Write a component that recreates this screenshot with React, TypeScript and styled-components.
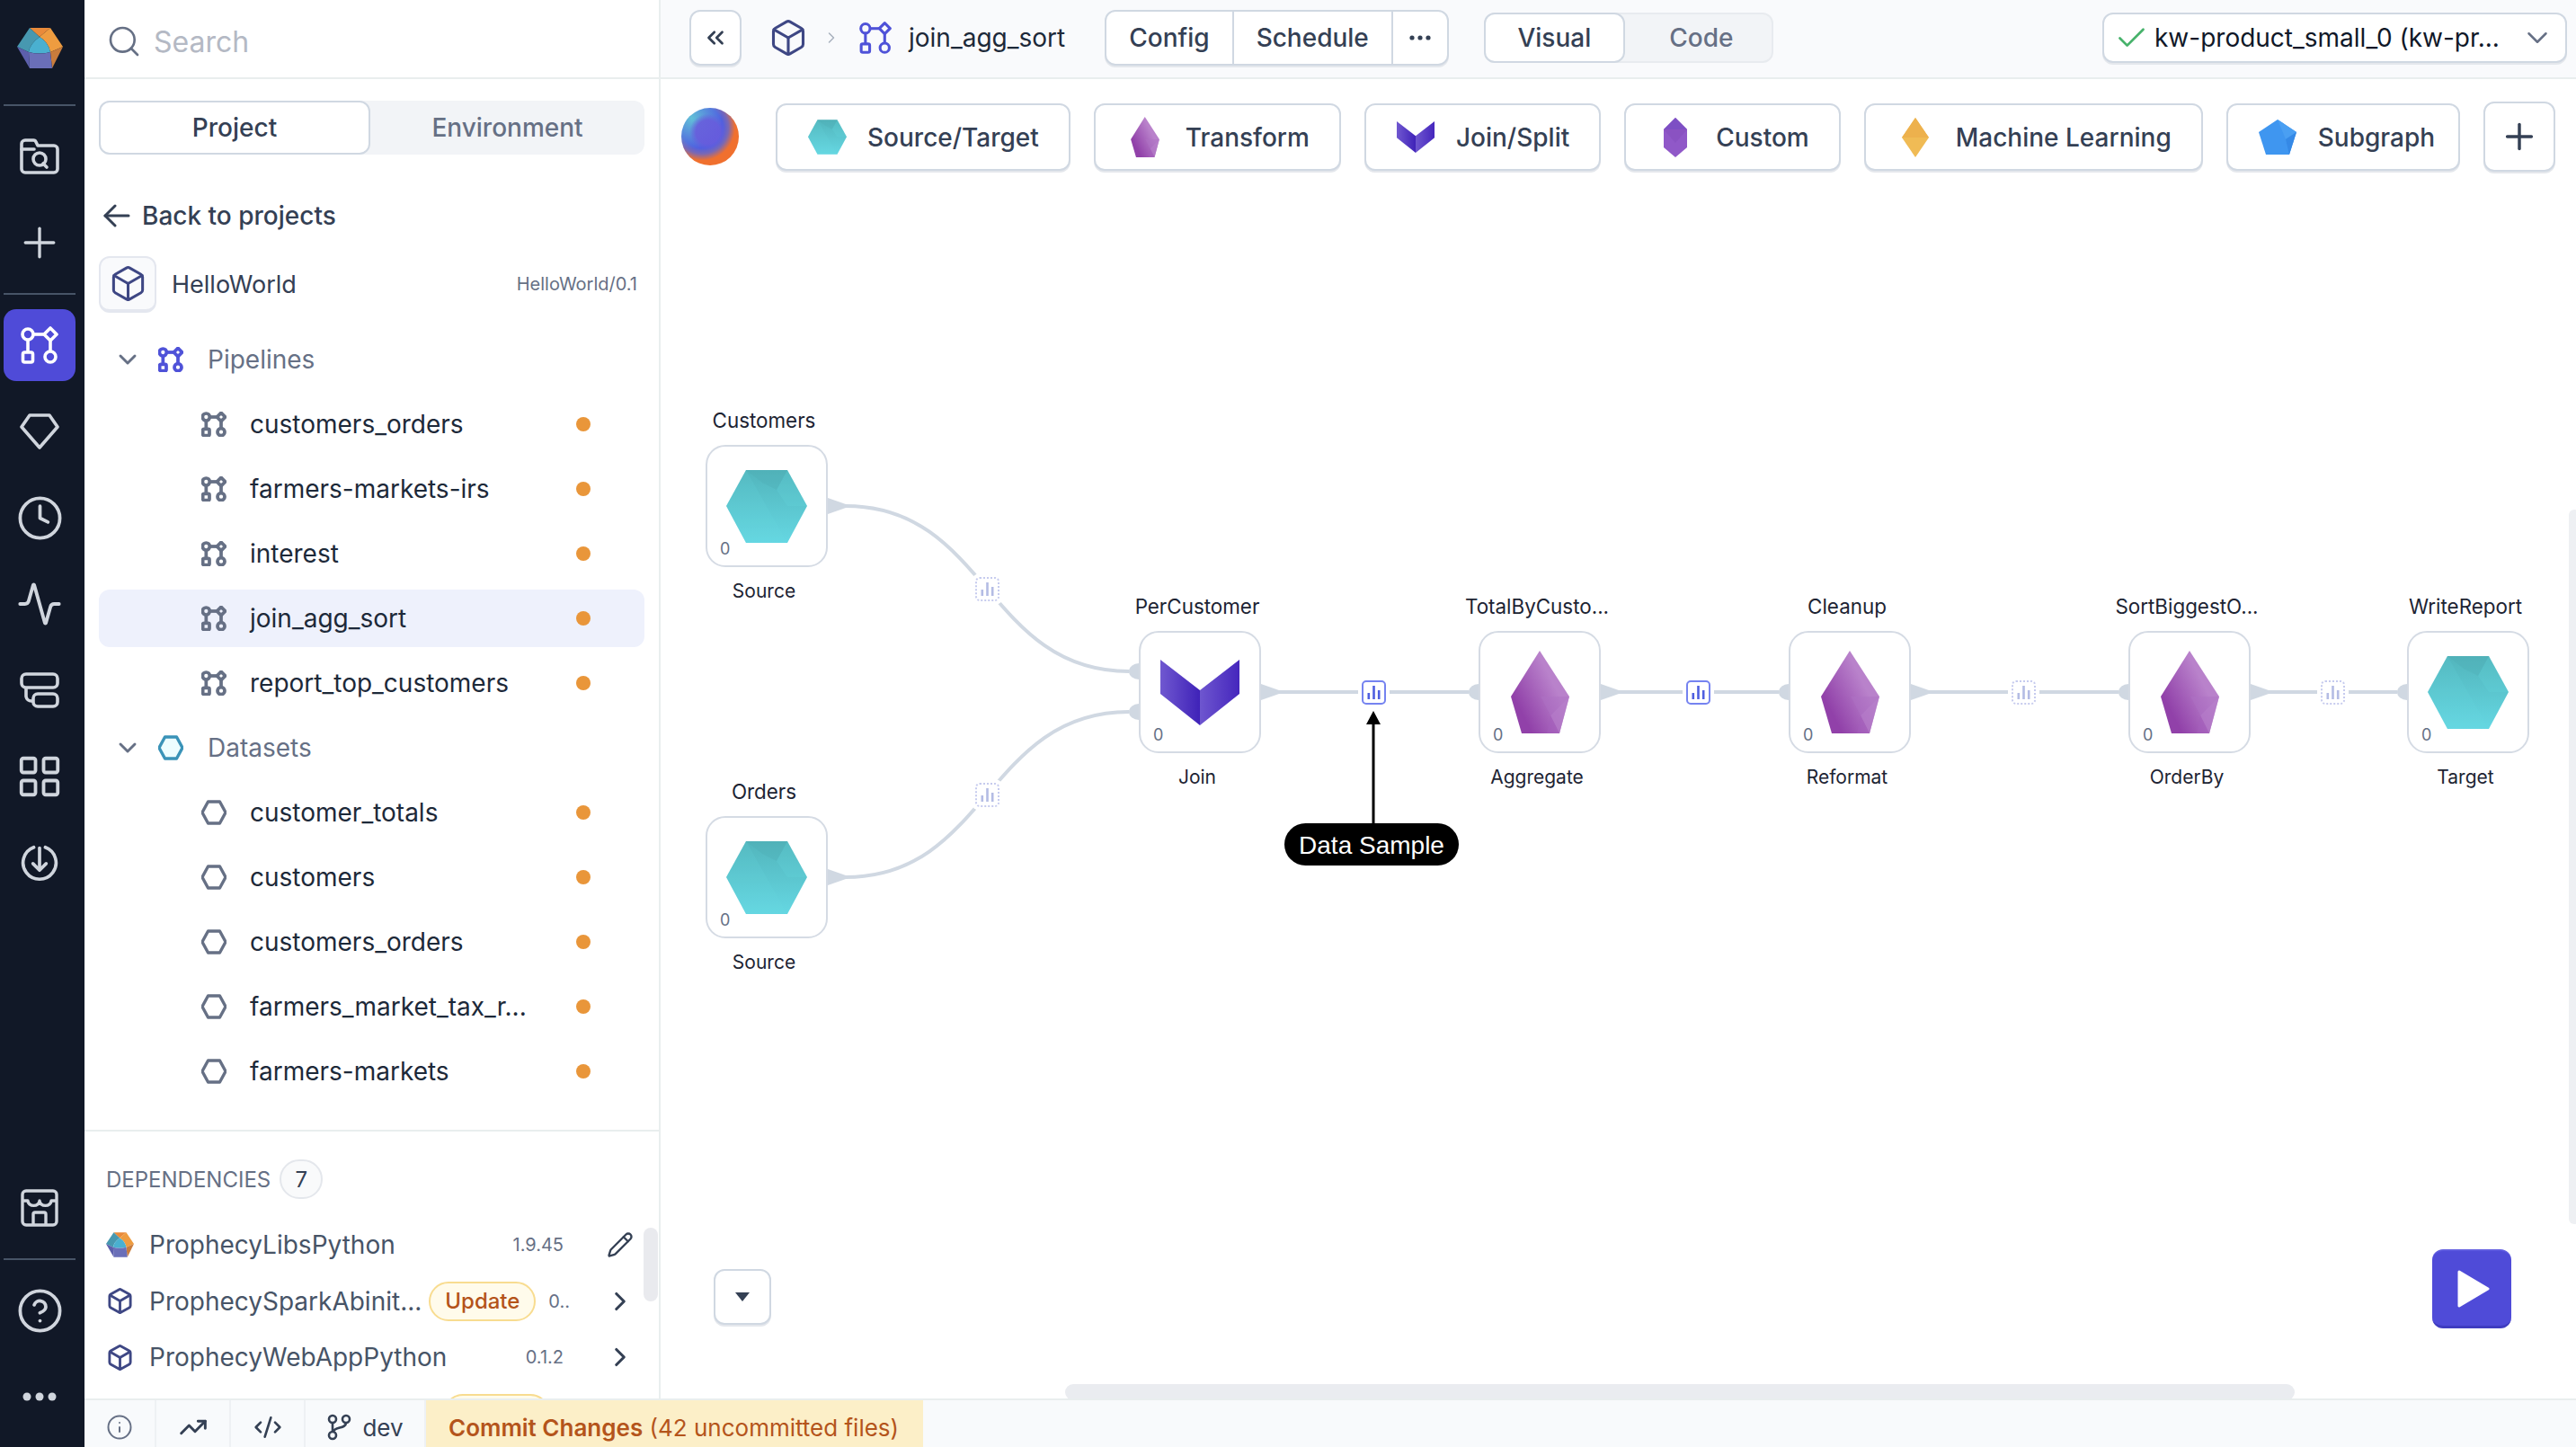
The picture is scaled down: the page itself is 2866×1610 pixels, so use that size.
import React from "react"
import styled, { createGlobalStyle } from "styled-components"
import {
    Box, Check, ChevronDown, ChevronRight, ChevronsLeft, CircleHelp, Clock, CodeXml,
    Activity, Info, LayoutGrid, Pencil, Plus, Search, TrendingUp,
} from "lucide-react"

const ORIGIN_X = 735
const ORIGIN_Y = 210
const EDGE = "#d0d8e2"

const GlobalStyle = createGlobalStyle`
    html, body {
        margin: 0;
        padding: 0;
        background: #fff;
        overflow: hidden;
    }
    body, button {
        font-family: Inter, "Noto Sans", sans-serif;
    }
    * {
        box-sizing: border-box;
    }
`

const Page = styled.div`
    display: flex;
    width: 2866px;
    height: 1610px;
    overflow: hidden;
`

/* left rail */
const Rail = styled.nav`
    width: 94px;
    flex: none;
    display: flex;
    flex-direction: column;
    align-items: center;
    gap: 16px;
    padding: 0 10px 16px 4px;
    background: #111827;
    color: #d0d5dd;
`

const RailLogo = styled.div`
    height: 100px;
    width: 100%;
    flex: none;
    display: flex;
    align-items: center;
    justify-content: center;
    padding-top: 6px;
`

const RailDivider = styled.div`
    width: 100%;
    height: 2px;
    flex: none;
    background: #475467;
`

const RailButton = styled.div<{ $active?: boolean }>`
    width: 80px;
    height: 80px;
    flex: none;
    display: flex;
    align-items: center;
    justify-content: center;
    border-radius: 14px;
    background: ${p => (p.$active ? "#4f4bd8" : "transparent")};
    color: ${p => (p.$active ? "#fff" : "#d0d5dd")};
`

const RailBottom = styled.div`
    margin-top: auto;
    width: 100%;
    display: flex;
    flex-direction: column;
    align-items: center;
    gap: 16px;
`

/* body */
const Body = styled.div`
    flex: 1;
    min-width: 0;
    display: flex;
    flex-direction: column;
`

const Workspace = styled.div`
    flex: 1;
    min-height: 0;
    display: flex;
`

/* sidebar */
const Sidebar = styled.aside`
    width: 641px;
    flex: none;
    display: flex;
    flex-direction: column;
    border-right: 2px solid #e9eeee;
    position: relative;
`

const SearchBar = styled.div`
    height: 88px;
    flex: none;
    display: flex;
    align-items: center;
    gap: 13px;
    padding: 6px 0 0 24px;
    border-bottom: 2px solid #e9eeee;
    color: #667085;
`

const SearchText = styled.span`
    font-size: 32px;
    color: #b4b9c4;
`

const Tabs = styled.div`
    display: flex;
    margin: 24px 16px 0;
    height: 60px;
    border-radius: 12px;
    background: #f2f4f7;
`

const SideTab = styled.div<{ $active?: boolean }>`
    display: flex;
    align-items: center;
    justify-content: center;
    flex: ${p => (p.$active ? "0 0 302px" : "1")};
    font-size: 28px;
    font-weight: 500;
    color: ${p => (p.$active ? "#344054" : "#667085")};
    background: ${p => (p.$active ? "#fff" : "transparent")};
    border-radius: 12px;
    border: ${p => (p.$active ? "2px solid #d0d8e2" : "none")};
`

const BackRow = styled.div`
    display: flex;
    align-items: center;
    gap: 13px;
    height: 40px;
    margin: 48px 16px 0 21px;
    font-size: 28px;
    font-weight: 500;
    color: #344054;
`

const ProjectRow = styled.div`
    display: flex;
    align-items: center;
    margin: 24px 24px 0 16px;
    height: 64px;
`

const ProjectBox = styled.div`
    width: 64px;
    height: 63px;
    flex: none;
    display: flex;
    align-items: center;
    justify-content: center;
    border-radius: 12px;
    background: #f9fafc;
    border: 2px solid #e4e7ef;
    border-bottom-width: 4px;
    color: #3e4784;
`

const ProjectName = styled.span`
    margin-left: 17px;
    font-size: 27px;
    color: #344054;
`

const ProjectVersion = styled.span`
    margin-left: auto;
    font-size: 20px;
    color: #667085;
`

const Tree = styled.div`
    flex: 1;
    min-height: 0;
    display: flex;
    flex-direction: column;
    gap: 8px;
    margin: 20px 16px 0;
`

const TreeHead = styled.div`
    height: 64px;
    flex: none;
    display: flex;
    align-items: center;
    padding-left: 16px;
    font-size: 28px;
    color: #667085;
`

const HeadChevron = styled.span`
    width: 32px;
    display: flex;
    justify-content: center;
    margin-right: 18px;
`

const HeadIcon = styled.span<{ $color?: string }>`
    width: 28px;
    display: flex;
    margin-right: 27px;
    color: ${p => p.$color ?? "inherit"};
`

const TreeItem = styled.div<{ $selected?: boolean }>`
    height: 64px;
    flex: none;
    display: flex;
    align-items: center;
    gap: 26px;
    padding: 0 60px 0 114px;
    border-radius: 12px;
    font-size: 28px;
    color: #1d2939;
    background: ${p => (p.$selected ? "#eef1fc" : "transparent")};
    & > svg {
        color: #667085;
        flex: none;
    }
`

const Dot = styled.span`
    width: 16px;
    height: 16px;
    margin-left: auto;
    border-radius: 50%;
    background: #e9963a;
`

const Deps = styled.section`
    height: 299px;
    flex: none;
    border-top: 2px solid #e9eeee;
    overflow: hidden;
    padding-left: 24px;
    position: relative;
`

const DepsHead = styled.div`
    display: flex;
    align-items: center;
    gap: 10px;
    height: 44px;
    margin-top: 31px;
    margin-bottom: 20px;
    font-size: 24px;
    color: #667085;
`

const CountBadge = styled.span`
    width: 48px;
    height: 44px;
    display: flex;
    align-items: center;
    justify-content: center;
    border-radius: 22px;
    border: 2px solid #e4e7ec;
    background: #f9fafb;
    font-size: 24px;
    color: #344054;
`

const DepRow = styled.div`
    height: 62.5px;
    display: flex;
    align-items: center;
    color: #3e4784;
`

const DepIcon = styled.span`
    width: 31px;
    flex: none;
    display: flex;
    justify-content: center;
    margin-right: 17px;
`

const DepName = styled.span`
    font-size: 28px;
    color: #475467;
    white-space: nowrap;
`

const DepSpacer = styled.span`
    width: 319px;
    flex: none;
`

const UpdatePill = styled.span`
    width: 119px;
    height: 44px;
    flex: none;
    display: flex;
    align-items: center;
    justify-content: center;
    border-radius: 22px;
    border: 2px solid #f8dc90;
    background: #fffbeb;
    font-size: 24px;
    font-weight: 500;
    color: #b4531a;
    margin-left: 8px;
`

const DepVersion = styled.span<{ $tight?: boolean }>`
    margin-left: auto;
    margin-right: ${p => (p.$tight ? "31px" : "38px")};
    font-size: 20px;
    color: #667085;
`

const DepAction = styled.span`
    width: 50px;
    margin-right: 18px;
    flex: none;
    display: flex;
    justify-content: center;
    color: #344054;
`

const DepScroll = styled.div`
    position: absolute;
    left: 622px;
    top: 107px;
    width: 16px;
    height: 82px;
    border-radius: 8px;
    background: #e9eaee;
`

/* editor */
const Editor = styled.main`
    flex: 1;
    min-width: 0;
    display: flex;
    flex-direction: column;
`

const TopBar = styled.header`
    height: 88px;
    flex: none;
    display: flex;
    align-items: center;
    padding: 0 10px 2px 32px;
    background: #f9fafc;
    border-bottom: 2px solid #e9eeee;
`

const Raised = styled.div`
    display: flex;
    align-items: center;
    background: #fff;
    border: 2px solid #d0d8e2;
    box-shadow: 0 2px 0 #e4e7ec;
    border-radius: 12px;
`

const CollapseButton = styled(Raised)`
    width: 58px;
    height: 62px;
    justify-content: center;
    color: #344054;
`

const Crumbs = styled.div`
    display: flex;
    align-items: center;
    margin-left: 30px;
    font-size: 28px;
    color: #1d2939;
`

const CrumbIcon = styled.span<{ $color: string }>`
    display: flex;
    color: ${p => p.$color};
`

const CrumbSep = styled.span`
    display: flex;
    margin: 0 21px 0 16px;
    color: #a8b0bd;
`

const CrumbName = styled.span`
    margin-left: 19px;
`

const ButtonGroup = styled(Raised)`
    height: 62px;
    margin-left: 44px;
`

const GroupItem = styled.div<{ $compact?: boolean }>`
    height: 100%;
    display: flex;
    align-items: center;
    padding: 0 ${p => (p.$compact ? "18px" : "25px")};
    font-size: 28px;
    font-weight: 500;
    color: #344054;
    & + & {
        border-left: 2px solid #d0d8e2;
    }
`

const ViewToggle = styled.div`
    width: 322px;
    height: 56px;
    margin-left: 39px;
    display: flex;
    border-radius: 12px;
    background: #f2f4f7;
    border: 2px solid #e8ebef;
`

const ViewTab = styled.div<{ $active?: boolean }>`
    flex: ${p => (p.$active ? "0 0 157px" : "1")};
    margin: ${p => (p.$active ? "-2px" : "0")};
    padding-left: ${p => (p.$active ? "0" : "9px")};
    display: flex;
    align-items: center;
    justify-content: center;
    border-radius: 12px;
    font-size: 28px;
    font-weight: 500;
    color: ${p => (p.$active ? "#344054" : "#667085")};
    background: ${p => (p.$active ? "#fff" : "transparent")};
    border: ${p => (p.$active ? "2px solid #d0d8e2" : "none")};
`

const EnvSelect = styled(Raised)`
    width: 517px;
    height: 56px;
    margin-left: auto;
    padding: 0 12px 0 11px;
    font-size: 28px;
    color: #101828;
    gap: 6px;
    & > svg:last-child {
        margin-left: auto;
        color: #667085;
    }
`

const Toolbar = styled.div`
    height: 122px;
    flex: none;
    display: flex;
    align-items: flex-start;
    gap: 26px;
    padding: 27px 0 0 23px;
`

const Bubble = styled.div`
    width: 64px;
    height: 64px;
    margin: 5px 15px 0 0;
    flex: none;
    border-radius: 50%;
    background:
        radial-gradient(circle at 46% 42%, rgba(104, 92, 220, 0.9) 0 26%, rgba(104, 92, 220, 0) 40%),
        radial-gradient(circle at 18% 18%, #62c0d8 0%, rgba(98, 192, 216, 0) 46%),
        radial-gradient(circle 46px at 36% 34%, #4f62de 0%, #4f5fe0 50%, #7a68b4 64%, #f0702e 80%);
`

const GemButton = styled(Raised)<{ $trail: number }>`
    height: 75px;
    padding: 0 ${p => p.$trail}px 0 23px;
    gap: 13px;
    font-size: 28px;
    font-weight: 500;
    color: #344054;
    white-space: nowrap;
`

const GemSlot = styled.span`
    width: 64px;
    flex: none;
    display: flex;
    justify-content: center;
`

const AddButton = styled(Raised)`
    width: 80px;
    height: 78px;
    margin-top: -2px;
    justify-content: center;
    color: #344054;
`

const Canvas = styled.div`
    flex: 1;
    min-height: 0;
    position: relative;
    overflow: hidden;
`

const EdgeLayer = styled.svg`
    position: absolute;
    left: 0;
    top: 0;
`

const NodeWrap = styled.div<{ $x: number; $y: number }>`
    position: absolute;
    left: ${p => p.$x - ORIGIN_X}px;
    top: ${p => p.$y - ORIGIN_Y - 42}px;
    width: 136px;
`

const NodeLabel = styled.div<{ $below?: boolean }>`
    width: 200px;
    height: 28px;
    margin-left: -35px;
    margin-top: ${p => (p.$below ? "12px" : "0")};
    margin-bottom: ${p => (p.$below ? "0" : "14px")};
    line-height: 30px;
    text-align: center;
    font-size: ${p => (p.$below ? "21px" : "22.4px")};
    color: #1d2433;
    white-space: nowrap;
`

const NodeCard = styled.div`
    position: relative;
    width: 136px;
    height: 136px;
    display: flex;
    align-items: center;
    justify-content: center;
    background: #fff;
    border: 2px solid #d5dbe4;
    border-radius: 22px;
`

const NodeCount = styled.span`
    position: absolute;
    left: 14px;
    top: 103px;
    font-size: 18px;
    line-height: 22px;
    color: #667085;
`

const Marker = styled.div<{ $x: number; $y: number; $live?: boolean }>`
    position: absolute;
    left: ${p => p.$x - ORIGIN_X - 13.5}px;
    top: ${p => p.$y - ORIGIN_Y - 13.5}px;
    width: 27px;
    height: 27px;
    display: flex;
    align-items: center;
    justify-content: center;
    border-radius: 5px;
    background: #fff;
    box-shadow: 0 0 0 4px #fff;
    border: 2px ${p => (p.$live ? "solid #7583f0" : "dotted #c6cbee")};
    color: ${p => (p.$live ? "#4f5fe0" : "#b4bce4")};
`

const Callout = styled.div`
    position: absolute;
    left: ${1429 - ORIGIN_X}px;
    top: ${916 - ORIGIN_Y}px;
    width: 194px;
    height: 47px;
    padding-top: 2px;
    display: flex;
    align-items: center;
    justify-content: center;
    border-radius: 24px;
    background: #000;
    color: #fff;
    font-family: "Liberation Sans", Arial, sans-serif;
    font-size: 28px;
`

const RunMenu = styled(Raised)`
    position: absolute;
    left: ${794 - ORIGIN_X}px;
    top: ${1412 - ORIGIN_Y}px;
    width: 64px;
    height: 62px;
    justify-content: center;
    color: #344054;
`

const PlayButton = styled.div`
    position: absolute;
    left: ${2706 - ORIGIN_X}px;
    top: ${1390 - ORIGIN_Y}px;
    width: 88px;
    height: 88px;
    display: flex;
    align-items: center;
    justify-content: center;
    padding-left: 4px;
    border-radius: 12px;
    background: #4f4bd8;
    border-top: 2px solid #5f5ce0;
    border-bottom: 3px solid #3f3cc0;
`

const HScroll = styled.div`
    position: absolute;
    left: ${1185 - ORIGIN_X}px;
    top: ${1540 - ORIGIN_Y}px;
    width: 1368px;
    height: 18px;
    border-radius: 9px;
    background: #eaecf0;
`

const VScroll = styled.div`
    position: absolute;
    left: ${2858 - ORIGIN_X}px;
    top: ${567 - ORIGIN_Y}px;
    width: 12px;
    height: 795px;
    border-radius: 6px;
    background: #eef0f3;
`

/* footer */
const Footer = styled.footer`
    height: 54px;
    flex: none;
    display: flex;
    align-items: stretch;
    background: #f8fafc;
    border-top: 2px solid #e9eeee;
    font-size: 26px;
    color: #344054;
`

const FootCell = styled.div<{ $width: number }>`
    width: ${p => p.$width}px;
    flex: none;
    display: flex;
    align-items: center;
    justify-content: center;
    gap: 12px;
    padding-top: 8px;
    border-right: 2px solid #eef1f4;
`

const CommitBar = styled.div`
    width: 553px;
    flex: none;
    display: flex;
    align-items: center;
    padding: 8px 0 0 25px;
    background: #fcefc8;
    color: #b4541b;
    white-space: pre;
`

const CommitStrong = styled.strong`
    font-weight: 600;
`

const CommitRest = styled.span`
    font-weight: 400;
`

/* drawings */
const LogoMark = ({ width, height }: { width: number; height: number }) => (
    <svg width={width} height={height} viewBox="0 0 51 45">
        <polygon points="14,0 37,0 25,10" fill="#e98a3a" />
        <path d="M37 0 L51 21 L37 27 Q35 16 25 10 Z" fill="#ee9c40" />
        <polygon points="51,21 39,45 37,27" fill="#c97c3c" />
        <path d="M14 0 L25 10 Q14 18 13 27 L0 21 Z" fill="#4798b0" />
        <path d="M25 10 Q35 16 37 27 Q25 30 13 27 Q14 18 25 10 Z" fill="#4ab0d0" />
        <polygon points="0,21 13,27 14,45" fill="#5c5fac" />
        <path d="M13 27 Q25 30 37 27 L39 45 L14 45 Z" fill="#6a6fb8" />
    </svg>
)

const FolderSearch = () => (
    <svg width="44" height="40" viewBox="0 0 44 40" fill="none" stroke="currentColor" strokeWidth="3.6" strokeLinejoin="round" strokeLinecap="round">
        <path d="M2 12V6a4 4 0 0 1 4-4h9a3 3 0 0 1 3 2l2 4h18a4 4 0 0 1 4 4v22a4 4 0 0 1-4 4H6a4 4 0 0 1-4-4z" />
        <path d="M2 12h14" />
        <circle cx="22" cy="23" r="7" />
        <path d="M26 28l4 4" />
    </svg>
)

const PipelineIcon = ({ size, weight = 3.6 }: { size: number; weight?: number }) => (
    <svg width={size} height={size} viewBox="0 0 42 42" fill="none" stroke="currentColor" strokeWidth={weight} strokeLinejoin="round">
        <circle cx="8" cy="9" r="6" />
        <path d="M14 9h13" />
        <path d="M33 2l7 7-7 7-7-7z" />
        <path d="M8 15v14" />
        <rect x="2.5" y="29" width="11" height="11" rx="2" />
        <path d="M33 16v12" />
        <circle cx="33" cy="34" r="6" />
    </svg>
)

const GemOutline = () => (
    <svg width="44" height="40" viewBox="0 0 44 40" fill="none" stroke="currentColor" strokeWidth="3.6" strokeLinejoin="round">
        <polygon points="11,2 33,2 42,15 22,38 2,15" />
    </svg>
)

const LayersIcon = () => (
    <svg width="44" height="40" viewBox="0 0 44 40" fill="none" stroke="currentColor" strokeWidth="3.6" strokeLinejoin="round">
        <rect x="2" y="2" width="40" height="15" rx="5" />
        <rect x="15" y="24" width="27" height="14" rx="5" />
        <path d="M7 17v10a6 6 0 0 0 6 5h2" />
    </svg>
)

const DownloadIcon = () => (
    <svg width="44" height="44" viewBox="0 0 24 24" fill="none" stroke="currentColor" strokeWidth="2" strokeLinecap="round" strokeLinejoin="round">
        <path d="M8.5 2.6a10 10 0 1 0 7 0" />
        <path d="M12 3v13" />
        <path d="M8 12.5l4 4 4-4" />
    </svg>
)

const StoreIcon = () => (
    <svg width="42" height="42" viewBox="0 0 42 42" fill="none" stroke="currentColor" strokeWidth="3.4" strokeLinejoin="round">
        <rect x="2" y="2" width="38" height="38" rx="4" />
        <path d="M2 13h6a6 5 0 0 0 13 0 6 5 0 0 0 13 0h6" />
        <path d="M14 40V28a2 2 0 0 1 2-2h10a2 2 0 0 1 2 2v12" />
    </svg>
)

const RailDots = () => (
    <svg width="38" height="10" viewBox="0 0 38 10" fill="currentColor">
        <circle cx="5" cy="5" r="4.5" />
        <circle cx="19" cy="5" r="4.5" />
        <circle cx="33" cy="5" r="4.5" />
    </svg>
)

const BackArrow = () => (
    <svg width="30" height="26" viewBox="0 0 30 26" fill="none" stroke="currentColor" strokeWidth="3" strokeLinecap="round" strokeLinejoin="round">
        <path d="M2 13h26" />
        <path d="M13 2L2 13l11 11" />
    </svg>
)

const HexOutline = ({ fill = "none", stroke = "currentColor" }: { fill?: string; stroke?: string }) => (
    <svg width="28" height="28" viewBox="0 0 28 28" fill={fill} stroke={stroke} strokeWidth="3.4" strokeLinejoin="round">
        <polygon points="7.5,2 20.5,2 27,14 20.5,26 7.5,26 1,14" />
    </svg>
)

const BranchIcon = () => (
    <svg width="28" height="30" viewBox="0 0 28 30" fill="none" stroke="currentColor" strokeWidth="2.6">
        <circle cx="7" cy="6" r="4" />
        <circle cx="22" cy="6" r="4" />
        <circle cx="7" cy="24" r="4" />
        <path d="M7 10v10M22 10c0 7-13 4-14 10" />
    </svg>
)

const MoreDots = () => (
    <svg width="24" height="6" viewBox="0 0 24 6" fill="currentColor">
        <circle cx="3" cy="3" r="2.6" />
        <circle cx="12" cy="3" r="2.6" />
        <circle cx="21" cy="3" r="2.6" />
    </svg>
)

const TealHex = ({ width, height }: { width: number; height: number }) => (
    <svg width={width} height={height} viewBox="0 0 90 81">
        <defs>
            <linearGradient id="tealFill" x1="0.5" y1="0" x2="0.5" y2="1">
                <stop offset="0" stopColor="#52b5bc" />
                <stop offset="1" stopColor="#65d7e2" />
            </linearGradient>
        </defs>
        <polygon points="22,0 68,0 90,40 68,81 22,81 0,40" fill="url(#tealFill)" />
        <polygon points="22,0 68,0 56,22 40,14" fill="#4aa9b0" opacity="0.25" />
        <polygon points="22,0 68,81 22,81 0,40" fill="#6adde6" opacity="0.14" />
        <polygon points="68,0 90,40 68,40 56,22" fill="#6adde6" opacity="0.18" />
    </svg>
)

const PurpleGem = ({ width, height }: { width: number; height: number }) => (
    <svg width={width} height={height} viewBox="0 0 65 92">
        <defs>
            <linearGradient id="purpleFill" x1="0.85" y1="0.2" x2="0.15" y2="0.7">
                <stop offset="0.25" stopColor="#b982cb" />
                <stop offset="1" stopColor="#9141a9" />
            </linearGradient>
        </defs>
        <polygon points="32,0 65,51 54,92 12,92 0,51" fill="url(#purpleFill)" />
        <polygon points="65,51 54,92 44,72" fill="#b57cc9" opacity="0.7" />
        <polygon points="65,51 44,72 33,51" fill="#ae72c3" opacity="0.5" />
        <polygon points="44,72 54,92 40,92" fill="#a45ebb" opacity="0.5" />
    </svg>
)

const JoinMark = ({ width, height }: { width: number; height: number }) => (
    <svg width={width} height={height} viewBox="0 0 88 73">
        <defs>
            <linearGradient id="joinLeft" x1="0" y1="0" x2="1" y2="0">
                <stop offset="0" stopColor="#7058d0" />
                <stop offset="1" stopColor="#3f22b8" />
            </linearGradient>
            <linearGradient id="joinRight" x1="0" y1="0" x2="1" y2="0">
                <stop offset="0" stopColor="#6e56cf" />
                <stop offset="1" stopColor="#4526bd" />
            </linearGradient>
        </defs>
        <polygon points="0,0 44,34 44,73 0,38" fill="url(#joinLeft)" />
        <polygon points="88,0 44,34 44,73 88,38" fill="url(#joinRight)" />
    </svg>
)

const CustomGem = () => (
    <svg width="26" height="44" viewBox="0 0 26 44">
        <polygon points="13,0 26,13 26,33 13,44 0,33 0,13" fill="#9058c8" />
        <polygon points="13,0 26,13 0,13" fill="#7d4fc4" />
        <polygon points="0,13 26,13 13,28" fill="#8a52c2" />
    </svg>
)

const LearningGem = () => (
    <svg width="30" height="44" viewBox="0 0 30 44">
        <polygon points="15,0 30,22 15,44 0,22" fill="#f0bb55" />
        <polygon points="15,0 30,22 0,22" fill="#edb14d" />
    </svg>
)

const SubgraphGem = () => (
    <svg width="42" height="39" viewBox="0 0 42 39">
        <polygon points="21,0 42,14 34,39 8,39 0,14" fill="#3f96f0" />
        <polygon points="21,0 42,14 30,22" fill="#4a9ff2" />
        <polygon points="42,14 34,39 30,22" fill="#3589e6" />
    </svg>
)

const StatBars = () => (
    <svg width="15" height="15" viewBox="0 0 15 15" fill="currentColor">
        <rect x="0.5" y="8" width="2.6" height="7" />
        <rect x="6.2" y="0" width="2.6" height="15" />
        <rect x="11.9" y="5" width="2.6" height="10" />
    </svg>
)

const pipelines = ["customers_orders", "farmers-markets-irs", "interest", "join_agg_sort", "report_top_customers"]
const datasets = ["customer_totals", "customers", "customers_orders", "farmers_market_tax_r...", "farmers-markets"]

const toolbarItems = [
    { label: "Source/Target", trail: 33, icon: <TealHex width={43} height={39} /> },
    { label: "Transform", trail: 33, icon: <PurpleGem width={32} height={45} /> },
    { label: "Join/Split", trail: 33, icon: <JoinMark width={42} height={35} /> },
    { label: "Custom", trail: 33, icon: <CustomGem /> },
    { label: "Machine Learning", trail: 33, icon: <LearningGem /> },
    { label: "Subgraph", trail: 26, icon: <SubgraphGem /> },
]

type NodeKind = "hex" | "join" | "gem"

const nodes: { x: number; y: number; title: string; sub: string; kind: NodeKind }[] = [
    { x: 785, y: 495, title: "Customers", sub: "Source", kind: "hex" },
    { x: 785, y: 908, title: "Orders", sub: "Source", kind: "hex" },
    { x: 1267, y: 702, title: "PerCustomer", sub: "Join", kind: "join" },
    { x: 1645, y: 702, title: "TotalByCusto...", sub: "Aggregate", kind: "gem" },
    { x: 1990, y: 702, title: "Cleanup", sub: "Reformat", kind: "gem" },
    { x: 2368, y: 702, title: "SortBiggestO...", sub: "OrderBy", kind: "gem" },
    { x: 2678, y: 702, title: "WriteReport", sub: "Target", kind: "hex" },
]

const outputs = [[921, 563], [921, 976], [1403, 770], [1781, 770], [2126, 770], [2504, 770]]
const inputs = [[1267, 747], [1267, 792], [1645, 770], [1990, 770], [2368, 770], [2678, 770]]

const markers = [
    { x: 1098, y: 655, live: false },
    { x: 1098, y: 884, live: false },
    { x: 1528, y: 770, live: true },
    { x: 1889, y: 770, live: true },
    { x: 2251, y: 770, live: false },
    { x: 2595, y: 770, live: false },
]

const NodeIcon = ({ kind }: { kind: NodeKind }) => {
    if (kind === "hex") return <TealHex width={90} height={81} />
    if (kind === "join") return <JoinMark width={88} height={73} />
    return <PurpleGem width={65} height={92} />
}

const App = () => (
    <Page>
        <GlobalStyle />
        <Rail>
            <RailLogo><LogoMark width={51} height={45} /></RailLogo>
            <RailDivider />
            <RailButton><FolderSearch /></RailButton>
            <RailButton><Plus size={54} strokeWidth={1.5} /></RailButton>
            <RailDivider />
            <RailButton $active><PipelineIcon size={42} /></RailButton>
            <RailButton><GemOutline /></RailButton>
            <RailButton><Clock size={53} strokeWidth={1.7} /></RailButton>
            <RailButton><Activity size={52} strokeWidth={1.8} /></RailButton>
            <RailButton><LayersIcon /></RailButton>
            <RailButton><LayoutGrid size={54} strokeWidth={1.7} /></RailButton>
            <RailButton><DownloadIcon /></RailButton>
            <RailBottom>
                <RailButton><StoreIcon /></RailButton>
                <RailDivider />
                <RailButton><CircleHelp size={53} strokeWidth={1.7} /></RailButton>
                <RailButton><RailDots /></RailButton>
            </RailBottom>
        </Rail>
        <Body>
            <Workspace>
                <Sidebar>
                    <SearchBar>
                        <Search size={40} strokeWidth={1.6} />
                        <SearchText>Search</SearchText>
                    </SearchBar>
                    <Tabs>
                        <SideTab $active>Project</SideTab>
                        <SideTab>Environment</SideTab>
                    </Tabs>
                    <BackRow>
                        <BackArrow />
                        Back to projects
                    </BackRow>
                    <ProjectRow>
                        <ProjectBox><Box size={43} strokeWidth={1.7} /></ProjectBox>
                        <ProjectName>HelloWorld</ProjectName>
                        <ProjectVersion>HelloWorld/0.1</ProjectVersion>
                    </ProjectRow>
                    <Tree>
                        <TreeHead>
                            <HeadChevron><ChevronDown size={40} strokeWidth={2.2} /></HeadChevron>
                            <HeadIcon $color="#4f52d8"><PipelineIcon size={28} weight={5.6} /></HeadIcon>
                            Pipelines
                        </TreeHead>
                        {pipelines.map(name => (
                            <TreeItem key={name} $selected={name === "join_agg_sort"}>
                                <PipelineIcon size={28} weight={5.6} />
                                {name}
                                <Dot />
                            </TreeItem>
                        ))}
                        <TreeHead>
                            <HeadChevron><ChevronDown size={40} strokeWidth={2.2} /></HeadChevron>
                            <HeadIcon><HexOutline fill="#ecfdff" stroke="#3a93b8" /></HeadIcon>
                            Datasets
                        </TreeHead>
                        {datasets.map(name => (
                            <TreeItem key={name}>
                                <HexOutline />
                                {name}
                                <Dot />
                            </TreeItem>
                        ))}
                    </Tree>
                    <Deps>
                        <DepsHead>
                            DEPENDENCIES
                            <CountBadge>7</CountBadge>
                        </DepsHead>
                        <DepRow>
                            <DepIcon><LogoMark width={31} height={30} /></DepIcon>
                            <DepName>ProphecyLibsPython</DepName>
                            <DepVersion>1.9.45</DepVersion>
                            <DepAction><Pencil size={30} strokeWidth={1.9} /></DepAction>
                        </DepRow>
                        <DepRow>
                            <DepIcon><Box size={37} strokeWidth={2.2} /></DepIcon>
                            <DepName>ProphecySparkAbinit...</DepName>
                            <UpdatePill>Update</UpdatePill>
                            <DepVersion $tight>0..</DepVersion>
                            <DepAction><ChevronRight size={34} strokeWidth={2.2} /></DepAction>
                        </DepRow>
                        <DepRow>
                            <DepIcon><Box size={37} strokeWidth={2.2} /></DepIcon>
                            <DepName>ProphecyWebAppPython</DepName>
                            <DepVersion>0.1.2</DepVersion>
                            <DepAction><ChevronRight size={34} strokeWidth={2.2} /></DepAction>
                        </DepRow>
                        <DepRow>
                            <DepIcon />
                            <DepSpacer />
                            <UpdatePill />
                        </DepRow>
                        <DepScroll />
                    </Deps>
                </Sidebar>
                <Editor>
                    <TopBar>
                        <CollapseButton><ChevronsLeft size={30} strokeWidth={2.2} /></CollapseButton>
                        <Crumbs>
                            <CrumbIcon $color="#3e4784"><Box size={44} strokeWidth={1.7} /></CrumbIcon>
                            <CrumbSep><ChevronRight size={20} strokeWidth={1.8} /></CrumbSep>
                            <CrumbIcon $color="#4f52d8"><PipelineIcon size={36} weight={3.6} /></CrumbIcon>
                            <CrumbName>join_agg_sort</CrumbName>
                        </Crumbs>
                        <ButtonGroup>
                            <GroupItem>Config</GroupItem>
                            <GroupItem>Schedule</GroupItem>
                            <GroupItem $compact><MoreDots /></GroupItem>
                        </ButtonGroup>
                        <ViewToggle>
                            <ViewTab $active>Visual</ViewTab>
                            <ViewTab>Code</ViewTab>
                        </ViewToggle>
                        <EnvSelect>
                            <Check size={39} strokeWidth={1.7} color="#47b26b" />
                            kw-product_small_0 (kw-pr...
                            <ChevronDown size={38} strokeWidth={1.6} />
                        </EnvSelect>
                    </TopBar>
                    <Toolbar>
                        <Bubble />
                        {toolbarItems.map(item => (
                            <GemButton key={item.label} $trail={item.trail}>
                                <GemSlot>{item.icon}</GemSlot>
                                {item.label}
                            </GemButton>
                        ))}
                        <AddButton><Plus size={46} strokeWidth={1.8} /></AddButton>
                    </Toolbar>
                    <Canvas>
                        <EdgeLayer width="2131" height="1346" viewBox={`${ORIGIN_X} ${ORIGIN_Y} 2131 1346`}>
                            <g fill="none" stroke={EDGE} strokeWidth="4">
                                <path d="M941 563C1098 563 1098 747 1256 747" />
                                <path d="M941 976C1098 976 1098 792 1256 792" />
                                {outputs.slice(2).map(([x, y], i) => (
                                    <path key={x} d={`M${x + 20} ${y}H${inputs[i + 2][0] - 11}`} />
                                ))}
                            </g>
                            <g fill={EDGE}>
                                {outputs.map(([x, y]) => (
                                    <polygon key={`${x}-${y}`} points={`${x},${y - 9} ${x + 20},${y - 2} ${x + 20},${y + 2} ${x},${y + 9}`} />
                                ))}
                                {inputs.map(([x, y]) => (
                                    <path key={`${x}-${y}`} d={`M${x} ${y - 9}a11 9 0 0 0 0 18z`} />
                                ))}
                            </g>
                            <g fill="none" stroke="#000" strokeWidth="3">
                                <path d="M1528 918V804" />
                            </g>
                            <polygon points="1528,791 1536,806 1520,806" fill="#000" />
                        </EdgeLayer>
                        {nodes.map(node => (
                            <NodeWrap key={node.title} $x={node.x} $y={node.y}>
                                <NodeLabel>{node.title}</NodeLabel>
                                <NodeCard>
                                    <NodeIcon kind={node.kind} />
                                    <NodeCount>0</NodeCount>
                                </NodeCard>
                                <NodeLabel $below>{node.sub}</NodeLabel>
                            </NodeWrap>
                        ))}
                        {markers.map(m => (
                            <Marker key={`${m.x}-${m.y}`} $x={m.x} $y={m.y} $live={m.live}><StatBars /></Marker>
                        ))}
                        <Callout>Data Sample</Callout>
                        <RunMenu>
                            <svg width="16" height="10" viewBox="0 0 16 10" fill="currentColor">
                                <polygon points="0,0 16,0 8,10" />
                            </svg>
                        </RunMenu>
                        <PlayButton>
                            <svg width="36" height="42" viewBox="0 0 36 42" fill="#fff" stroke="#fff" strokeWidth="3" strokeLinejoin="round">
                                <polygon points="2,2 34,21 2,40" />
                            </svg>
                        </PlayButton>
                        <HScroll />
                        <VScroll />
                    </Canvas>
                </Editor>
            </Workspace>
            <Footer>
                <FootCell $width={80}><Info size={30} strokeWidth={1.6} color="#667085" /></FootCell>
                <FootCell $width={83}><TrendingUp size={32} strokeWidth={2.2} /></FootCell>
                <FootCell $width={83}><CodeXml size={32} strokeWidth={2} /></FootCell>
                <FootCell $width={134}><BranchIcon />dev</FootCell>
                <CommitBar>
                    <CommitStrong>Commit Changes</CommitStrong>
                    <CommitRest> (42 uncommitted files)</CommitRest>
                </CommitBar>
            </Footer>
        </Body>
    </Page>
)

export default App
